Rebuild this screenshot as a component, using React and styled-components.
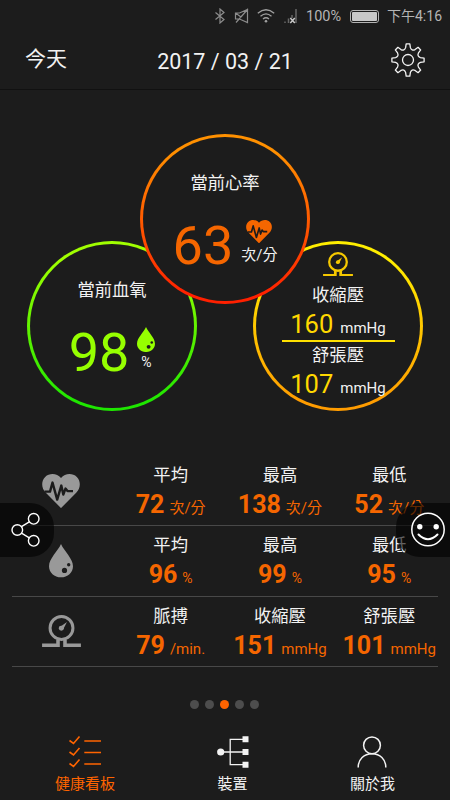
import { useState } from 'react'
import styled, { createGlobalStyle } from 'styled-components'

const GlobalStyle = createGlobalStyle`
  * {
    box-sizing: border-box;
  }

  body {
    margin: 0;
    background: #1c1c1c;
    font-family: Roboto, 'Noto Sans CJK TC', sans-serif;
    color: #f2f2f2;
  }

  svg {
    display: block;
    flex-shrink: 0;
  }
`

const Screen = styled.div`
  position: relative;
  display: flex;
  flex-direction: column;
  width: 450px;
  height: 800px;
  overflow: hidden;
  background: #1c1c1c;
`

const StatusBar = styled.div`
  display: flex;
  align-items: center;
  height: 32px;
  padding: 0 8px 0 214px;
  color: #b4b4b4;
  font-size: 14px;
  line-height: 16px;
  white-space: nowrap;
`

const StatusIcons = styled.div`
  display: flex;
  align-items: center;
  gap: 8px;
  width: 92px;
`

const Percent = styled.span`
  width: 44px;
  padding-top: 1px;
  font-size: 14.5px;
`

const Battery = styled.div`
  width: 29px;
  height: 13px;
  margin-right: 8px;
  padding: 1px;
  border: 1px solid #b4b4b4;
  border-radius: 3px;

  &::before {
    content: '';
    display: block;
    height: 100%;
    border-radius: 1px;
    background: #c8c8c8;
  }
`

const Header = styled.header`
  display: grid;
  grid-template-columns: 110px 1fr 110px;
  align-items: center;
  height: 58px;
  padding: 0 25px;
  border-bottom: 1px solid #111;

  svg {
    justify-self: end;
    margin-top: -1px;
  }
`

const Today = styled.span`
  font-size: 21px;
  line-height: 24px;
  margin-bottom: 4px;
`

const DateText = styled.span`
  margin: 2px -10px 0;
  font-size: 21.5px;
  line-height: 24px;
  text-align: center;
  white-space: nowrap;
`

const Rings = styled.section`
  display: flex;
  flex-direction: column;
  align-items: center;
  height: 366px;
  padding-top: 44px;
`

const RingRow = styled.div`
  display: flex;
  gap: 56px;
`

const Ring = styled.div`
  width: 170px;
  height: 170px;
  padding: 2.6px;
  border-radius: 50%;
  background: linear-gradient(${props => props.$from} 10%, ${props => props.$to} 95%);
  ${props => props.$front && 'z-index: 1; margin-bottom: -63px;'}
`

const RingBody = styled.div`
  display: flex;
  flex-direction: column;
  align-items: center;
  height: 100%;
  padding-top: ${props => props.$compact ? '8px' : '36.4px'};
  border-radius: 50%;
  background: #1c1c1c;
`

const Title = styled.div`
  font-size: 17.3px;
  line-height: 20px;
  white-space: nowrap;
`

const Reading = styled.div`
  display: flex;
  gap: 8px;
  margin-top: 26px;
`

const BigNumber = styled.span`
  color: ${props => props.$color};
  font-size: 54px;
  line-height: 54px;
`

const Side = styled.div`
  display: flex;
  flex-direction: column;
  align-items: center;
  justify-content: space-between;
  height: 43px;
  margin-top: 1px;
  font-size: ${props => props.$small ? '14px' : '15px'};
  line-height: 16px;
`

const Tinted = styled.span`
  color: ${props => props.$color};
`

const PressureTitle = styled(Title)`
  margin-top: ${props => props.$first ? '9px' : '0'};
`

const Pressure = styled.div`
  display: flex;
  align-items: baseline;
  gap: 7px;
  height: 26px;
  margin-top: 6px;
  color: #ffd800;
  font-size: 25.5px;
  line-height: 26px;

  small {
    color: #f2f2f2;
    font-size: 15px;
  }
`

const Divider = styled.div`
  width: 113px;
  height: 2px;
  margin: 3px 0;
  background: #ffe100;
`

const Stats = styled.section`
  height: 211px;
  padding: 0 12px;
`

const StatRow = styled.div`
  display: grid;
  grid-template-columns: 104px repeat(3, 109.3px);
  height: 70.3px;
  border-bottom: 1px solid #484848;
`

const StatIcon = styled.div`
  display: flex;
  align-items: center;
  justify-content: center;
  width: 98px;
  color: #999;
`

const Stat = styled.div`
  display: flex;
  flex-direction: column;
  align-items: center;
  padding-top: 9px;
`

const StatValue = styled.div`
  display: flex;
  align-items: baseline;
  gap: 5px;
  margin-top: 7px;
  color: #f56600;
  font-size: 25px;
  font-weight: 700;
  line-height: 26px;
  white-space: nowrap;

  small {
    font-size: ${props => props.$small ? '14px' : '15px'};
    font-weight: 400;
  }
`

const Dots = styled.div`
  display: flex;
  justify-content: center;
  align-items: center;
  gap: 6px;
  height: 74px;
  padding-right: 1px;
`

const Dot = styled.span`
  width: 9px;
  height: 9px;
  border-radius: 50%;
  background: ${props => props.$active ? '#ff6400' : '#4d4d4d'};
`

const Nav = styled.nav`
  display: flex;
  justify-content: space-between;
  height: 64px;
  margin-top: -5px;
  padding: 0 55px;
`

const NavItem = styled.button`
  display: flex;
  flex-direction: column;
  align-items: center;
  gap: 6px;
  padding: 0;
  border: none;
  background: none;
  color: ${props => props.$active ? '#ff6400' : '#f2f2f2'};
  font-family: inherit;
  font-size: 15px;
  line-height: 20px;
  cursor: pointer;
`

const FloatButton = styled.button`
  position: absolute;
  top: 503px;
  ${props => props.$right ? 'right: 0;' : 'left: 0;'}
  z-index: 2;
  width: 54px;
  height: 54px;
  padding: 0;
  border: none;
  border-radius: ${props => props.$right ? '24px 0 0 24px' : '0 24px 24px 0'};
  background: rgba(0, 0, 0, 0.6);
  color: #fff;
  cursor: pointer;
`

const HeartIcon = ({ size }) => (
  <svg width={size} height={size * 0.9} viewBox="0 0 38 34">
    <path d="M19 34L3.8 18.6C-1 13.7-.8 6.5 3.2 2.8C7.5-1.2 15-1 19 4C23-1 30.5-1.200 34.8 2.8C38.8 6.5 39 13.7 34.2 18.6Z" fill="currentColor" />
    <path d="M2.500 17.500H8L10.500 8.500L15.200 25.500L19.300 11.500L21.300 20.500L23.500 14.500L25.500 17H31" fill="none" stroke="#1c1c1c" strokeWidth="2.4" strokeLinejoin="round" />
  </svg>
)

const DropIcon = ({ width }) => (
  <svg width={width} height={width * 1.39} viewBox="0 0 24 33.4">
    <path d="M12 0C15 7 24 14.5 24 22.3C24 28.7 18.6 33.4 12 33.4S0 28.7 0 22.3C0 14.5 9 7 12 0Z" fill="currentColor" />
    <circle cx="15.5" cy="26.5" r="2.6" fill="#1c1c1c" />
    <circle cx="19.7" cy="20.8" r="1.7" fill="#1c1c1c" />
  </svg>
)

const GaugeIcon = ({ width }) => (
  <svg width={width} height={width * 0.83} viewBox="0 0 39 32.5" fill="none" stroke="currentColor">
    <circle cx="19.5" cy="13" r="11.5" strokeWidth="3" />
    <path d="M0 30.5H16V24.5M23 24.5V30.5H39" strokeWidth="3.600" />
    <circle cx="19.3" cy="13.3" r="2.5" fill="currentColor" stroke="none" />
    <path d="M17.8 12L25 7L21 14.8Z" fill="currentColor" stroke="none" />
  </svg>
)

const polar = (angle, radius) => {
  const a = (angle - 90) * Math.PI / 180
  return `${(17 + radius * Math.cos(a)).toFixed(2)} ${(17 + radius * Math.sin(a)).toFixed(2)}`
}

// Eight narrow teeth joined by curved valleys
const gearPath = () => {
  let d = ''
  for (let i = 0; i < 8; i++) {
    const t = i * 45
    d += `${i ? 'L' : 'M'}${polar(t - 6.5, 16.2)}L${polar(t + 6.5, 16.2)}L${polar(t + 11, 12.6)}`
    d += `Q${polar(t + 22.5, 9.6)} ${polar(t + 34, 12.6)}`
  }
  return `${d}Z`
}

const GearIcon = () => (
  <svg width="34" height="34" viewBox="0 0 34 34" fill="none" stroke="#f2f2f2" strokeWidth="1.3" strokeLinejoin="round">
    <path d={gearPath()} />
    <circle cx="17" cy="17" r="5.5" />
  </svg>
)

const BluetoothIcon = () => (
  <svg width="12" height="16" viewBox="0 0 12 16" fill="none" stroke="#8c8c8c" strokeWidth="1.2">
    <path d="M1.5 4.5L10 11.5L6 15V1L10 4.5L1.5 11.5" />
  </svg>
)

const MuteIcon = () => (
  <svg width="15" height="16" viewBox="0 0 15 16" fill="none" stroke="#8c8c8c" strokeWidth="1.2">
    <path d="M1.5 5H5.5L13.5 1.5V14.5L5.5 11H1.5ZM14 1L2 14.500M1.500 5L7 9" />
  </svg>
)

const WifiIcon = () => (
  <svg width="18" height="16" viewBox="0 0 18 16" fill="none" stroke="#a0a0a0" strokeWidth="1.3">
    <path d="M.8 5.3Q9-1.8 17.2 5.3M3.5 8.3Q9 3.6 14.5 8.3M6 11Q9 8.5 12 11" />
    <circle cx="9" cy="13.3" r="1.3" fill="#a0a0a0" stroke="none" />
  </svg>
)

const SignalIcon = () => (
  <svg width="15" height="16" viewBox="0 0 13 16" fill="none" stroke="#666" strokeWidth="1.5">
    <path d="M1 13.5V15M4.5 10.5V15M8 7V10M12 1V15" />
    <path d="M6.3 10L10.800 15M10.800 10L6.3 15" stroke="#c8c8c8" />
  </svg>
)

const ShareIcon = () => (
  <svg width="54" height="54" viewBox="0 0 54 54" fill="none" stroke="currentColor" strokeWidth="1.4">
    <circle cx="17.3" cy="27" r="5.3" />
    <circle cx="33.7" cy="15.8" r="5.3" />
    <circle cx="33.7" cy="37.8" r="5.3" />
    <path d="M21.5 23.7L29.3 18.8M21.5 30.2L29.3 34.8" />
  </svg>
)

const SmileIcon = () => (
  <svg width="54" height="54" viewBox="0 0 54 54" fill="none" stroke="currentColor" strokeWidth="1.5">
    <circle cx="32" cy="26.5" r="16.2" />
    <circle cx="23.8" cy="23.7" r="2.7" fill="currentColor" stroke="none" />
    <circle cx="40.2" cy="23.7" r="2.7" fill="currentColor" stroke="none" />
    <path d="M22.5 31.5Q32 41 41.5 31.5" strokeWidth="2" strokeLinecap="round" />
  </svg>
)

const ChecklistIcon = () => (
  <svg width="32" height="32" viewBox="0 0 32 32" fill="none" stroke="currentColor" strokeWidth="1.6">
    {[0, 11.5, 23].map(y => (
      <path key={y} d={`M.5 ${y + 4.5}L4.5 ${y + 7.5}L10.5 ${y + 0.5}M15.3 ${y + 5}H32`} />
    ))}
  </svg>
)

const DevicesIcon = () => (
  <svg width="32" height="32" viewBox="0 0 32 32" fill="none" stroke="currentColor" strokeWidth="1.3">
    <path d="M4 16H26M26 3.3H13.2V28.7H26" />
    <circle cx="3.7" cy="16" r="3.6" fill="currentColor" stroke="none" />
    <path d="M25.5 .3H31.5V6.3H25.5ZM25.5 13H31.5V19H25.5ZM25.5 25.7H31.5V31.7H25.5Z" fill="currentColor" stroke="none" />
  </svg>
)

const PersonIcon = () => (
  <svg width="30" height="32" viewBox="0 0 30 32" fill="none" stroke="currentColor" strokeWidth="1.5">
    <circle cx="15" cy="9.3" r="8.4" />
    <path d="M1.2 31.5C1.2 23 7 17.7 15 17.7S28.8 23 28.8 31.5" />
  </svg>
)

const stats = [
  {
    icon: <HeartIcon size={38} />,
    items: [['平均', 72, '次/分'], ['最高', 138, '次/分'], ['最低', 52, '次/分']]
  },
  {
    icon: <DropIcon width={24} />,
    items: [['平均', 96, '%'], ['最高', 99, '%'], ['最低', 95, '%']]
  },
  {
    icon: <GaugeIcon width={39} />,
    items: [['脈搏', 79, '/min.'], ['收縮壓', 151, 'mmHg'], ['舒張壓', 101, 'mmHg']]
  }
]

const tabs = [
  { id: 'dashboard', label: '健康看板', icon: <ChecklistIcon /> },
  { id: 'devices', label: '裝置', icon: <DevicesIcon /> },
  { id: 'about', label: '關於我', icon: <PersonIcon /> }
]

const App = () => {
  const [tab, setTab] = useState('dashboard')

  return (
    <Screen>
      <GlobalStyle />
      <StatusBar>
        <StatusIcons>
          <BluetoothIcon />
          <MuteIcon />
          <WifiIcon />
          <SignalIcon />
        </StatusIcons>
        <Percent>100%</Percent>
        <Battery />
        <span>下午4:16</span>
      </StatusBar>

      <Header>
        <Today>今天</Today>
        <DateText>2017 / 03 / 21</DateText>
        <GearIcon />
      </Header>

      <Rings>
        <Ring $front $from="#ff9000" $to="#ff2000">
          <RingBody>
            <Title>當前心率</Title>
            <Reading>
              <BigNumber $color="#f56600">63</BigNumber>
              <Side>
                <Tinted $color="#f56600"><HeartIcon size={26} /></Tinted>
                次/分
              </Side>
            </Reading>
          </RingBody>
        </Ring>
        <RingRow>
          <Ring $from="#a0ff00" $to="#1ee600">
            <RingBody>
              <Title>當前血氧</Title>
              <Reading>
                <BigNumber $color="#96ff00">98</BigNumber>
                <Side $small>
                  <Tinted $color="#96ff00"><DropIcon width={18} /></Tinted>
                  %
                </Side>
              </Reading>
            </RingBody>
          </Ring>
          <Ring $from="#ffee00" $to="#ff9c00">
            <RingBody $compact>
              <Tinted $color="#f5c800"><GaugeIcon width={30} /></Tinted>
              <PressureTitle $first>收縮壓</PressureTitle>
              <Pressure>160 <small>mmHg</small></Pressure>
              <Divider />
              <PressureTitle>舒張壓</PressureTitle>
              <Pressure>107 <small>mmHg</small></Pressure>
            </RingBody>
          </Ring>
        </RingRow>
      </Rings>

      <Stats>
        {stats.map((row, i) => (
          <StatRow key={i}>
            <StatIcon>{row.icon}</StatIcon>
            {row.items.map(([label, value, unit]) => (
              <Stat key={label}>
                <Title>{label}</Title>
                <StatValue $small={unit === '%'}>
                  {value}
                  <small>{unit}</small>
                </StatValue>
              </Stat>
            ))}
          </StatRow>
        ))}
      </Stats>

      <Dots>
        {[0, 1, 2, 3, 4].map(n => <Dot key={n} $active={n === 2} />)}
      </Dots>

      <Nav>
        {tabs.map(t => (
          <NavItem key={t.id} $active={tab === t.id} onClick={() => setTab(t.id)}>
            {t.icon}
            {t.label}
          </NavItem>
        ))}
      </Nav>

      <FloatButton aria-label="分享"><ShareIcon /></FloatButton>
      <FloatButton $right aria-label="心情"><SmileIcon /></FloatButton>
    </Screen>
  )
}

export default App
